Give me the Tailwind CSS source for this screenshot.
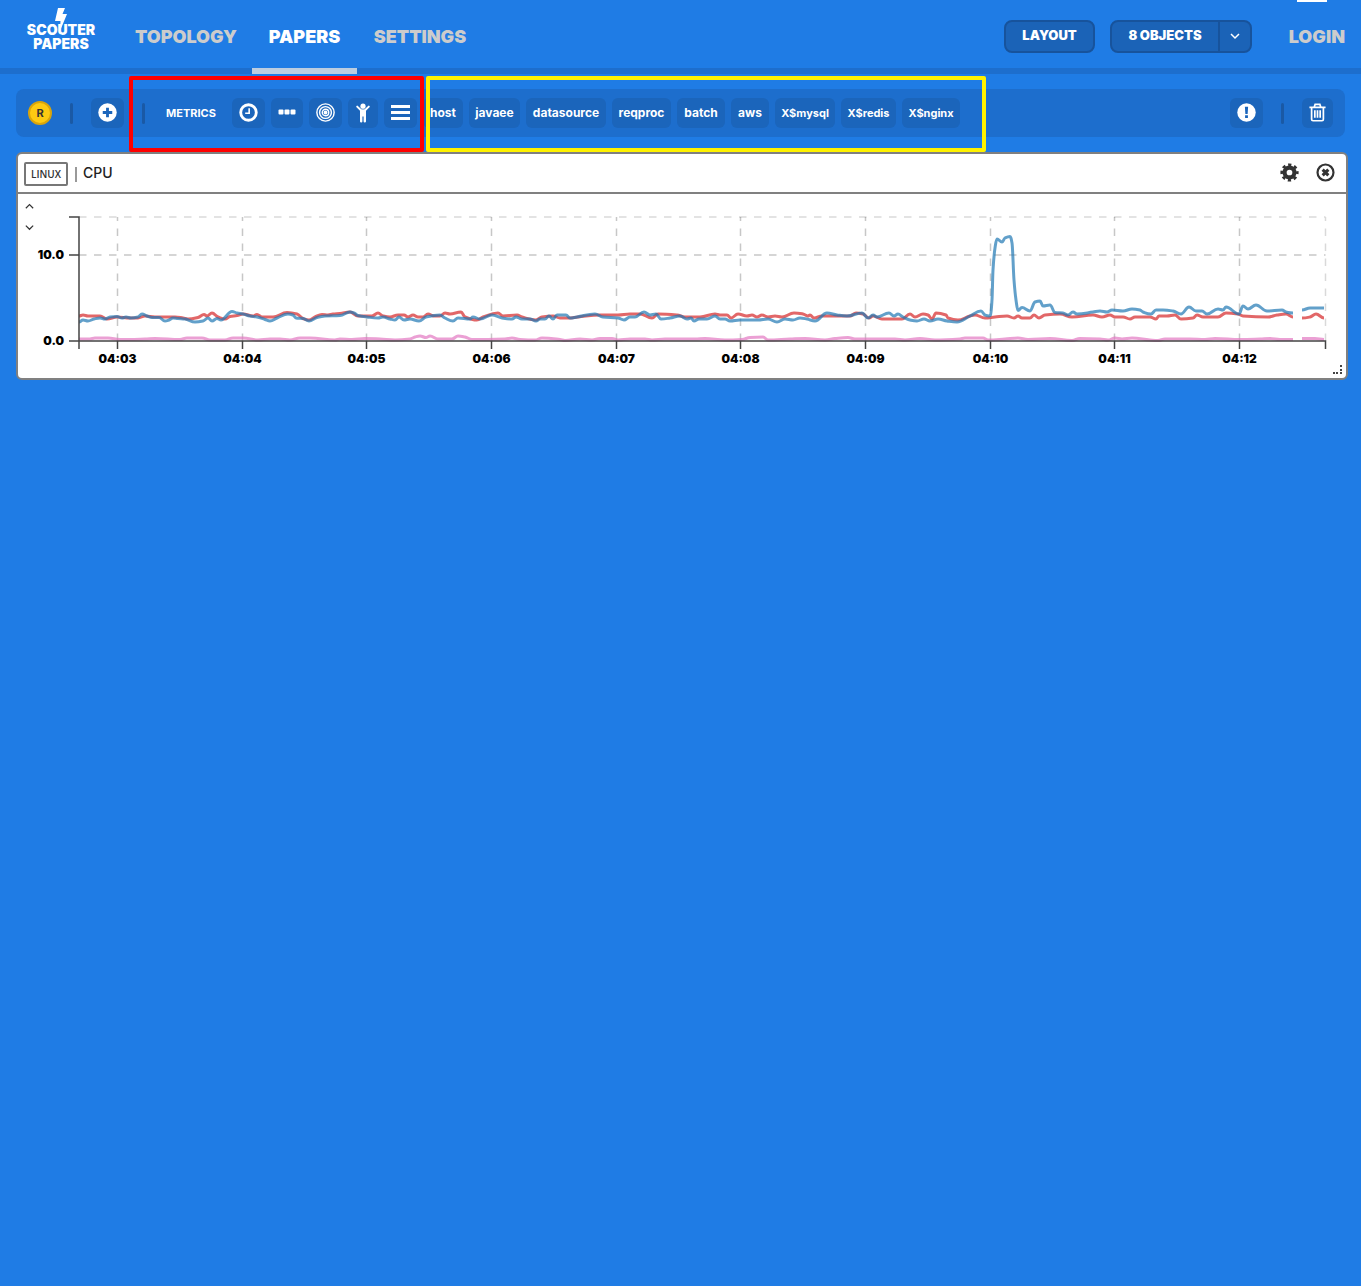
<!DOCTYPE html>
<html lang="en">
<head>
<meta charset="utf-8">
<title>Scouter Papers</title>
<script src="https://cdn.jsdelivr.net/npm/@tailwindcss/browser@4"></script>
</head>
<body class="relative min-h-screen bg-[#1f7ce5] font-['Inter',sans-serif] text-white">

<header class="flex h-[74px] border-b-6 border-[#1d6ecd] pr-4">
  <a href="#" class="flex w-[122px] justify-center pt-2" aria-label="Scouter Papers">
    <span class="relative block h-12 w-20 pt-[15px] text-center text-[14px] leading-[14px] font-black">
      <svg class="absolute top-0 left-[32px] h-6 w-4" viewBox="0 0 16 24" fill="#fff"><path d="M5 0h7L9.500 6H14L7 23 7.500 13H2z"/></svg>
      <span class="block">SCOUTER</span>
      <span class="block">PAPERS</span>
    </span>
  </a>
  <nav class="-ml-0.5 flex text-[18px] font-black text-[#ccc]">
    <a href="#" class="flex h-[74px] w-[132px] items-center justify-center pb-0.5">TOPOLOGY</a>
    <a href="#" class="flex h-[74px] w-[105px] items-center justify-center border-b-6 border-[#bccde0] pt-1 text-white">PAPERS</a>
    <a href="#" class="flex h-[74px] w-[126px] items-center justify-center pb-0.5">SETTINGS</a>
  </nav>
  <div class="ml-auto flex items-center gap-[15px] pt-1 text-[13px] font-black">
    <button class="h-[33px] w-[91px] rounded-lg border-2 border-[#17539c] bg-[#1b63b7]">LAYOUT</button>
    <div class="flex h-[33px] rounded-lg border-2 border-[#17539c] bg-[#1b63b7]">
      <button class="w-[106px]">8 OBJECTS</button>
      <button class="flex w-8 items-center justify-center border-l-2 border-[#17539c]" aria-label="Select objects">
        <svg class="size-3" viewBox="0 0 12 12" fill="none" stroke="#fff" stroke-width="1.500"><path d="M2 4l4 4 4-4"/></svg>
      </button>
    </div>
    <a href="#" class="ml-4 w-[62px] text-right text-[18px] text-[#ccc]">LOGIN</a>
  </div>
  <div class="absolute top-0 right-[34px] h-0.5 w-[30px] bg-white"></div>
</header>

<div class="mt-[15px] mr-4 ml-4 flex h-12 items-center rounded-lg bg-[#1d6ecd] px-3 text-[12px] font-bold">
  <div class="flex size-6 items-center justify-center rounded-full border-2 border-[#d8a40c] bg-[#fdca12] text-[11px] text-[#333]">R</div>
  <div class="ml-[18px] h-[21px] w-[3px] rounded-sm bg-[#1a59a5]"></div>
  <button class="ml-[18px] flex h-[30px] w-[33px] items-center justify-center rounded-md bg-[#1b65bb]" aria-label="Add">
    <svg class="mb-px size-[19px]" viewBox="0 0 20 20"><circle cx="10" cy="10" r="9.700" fill="#fff"/><path d="M10 5v10M5 10h10" stroke="#1b65bb" stroke-width="3"/></svg>
  </button>
  <div class="ml-[18px] h-[21px] w-[3px] rounded-sm bg-[#1a59a5]"></div>
  <div class="ml-[17px] flex w-[58px] justify-center text-[11px]">METRICS</div>
  <div class="ml-3 flex gap-1.5">
    <button class="flex h-[30px] w-[33px] items-center justify-center rounded-md bg-[#1b65bb]" aria-label="Time">
      <svg class="mb-px size-[19px]" viewBox="0 0 20 20" fill="none" stroke="#fff"><circle cx="10" cy="10" r="8.200" stroke-width="3"/><path d="M10.700 5.500v5.300H6.500" stroke-width="1.700"/></svg>
    </button>
    <button class="flex h-[30px] w-8 items-center justify-center rounded-md bg-[#1b65bb]" aria-label="More">
      <svg class="mb-0.5 size-5" viewBox="0 0 20 20" fill="#fff"><rect x="1.500" y="7.500" width="5" height="5" rx="1"/><rect x="7.500" y="7.500" width="5" height="5" rx="1"/><rect x="13.500" y="7.500" width="5" height="5" rx="1"/></svg>
    </button>
    <button class="flex h-[30px] w-[33px] items-center justify-center rounded-md bg-[#1b65bb]" aria-label="Target">
      <svg class="mb-px size-[19px]" viewBox="0 0 20 20" fill="none" stroke="#fff" stroke-width="1.500"><circle cx="10" cy="10" r="9.100"/><circle cx="10" cy="10" r="6.200"/><circle cx="10" cy="10" r="3.400"/><circle cx="10" cy="10" r="2" fill="#fff" stroke="none"/></svg>
    </button>
    <button class="flex h-[30px] w-[30px] items-center justify-center rounded-md bg-[#1b65bb]" aria-label="Active users">
      <svg class="size-5" viewBox="0 0 20 20" fill="#fff"><circle cx="10" cy="3.200" r="2.600"/><path d="M4.200 3.600L8.200 7.500h3.600l4-3.900" fill="none" stroke="#fff" stroke-width="2" stroke-linecap="round" stroke-linejoin="round"/><path d="M7 6.700h6V18.500q0 1-1.200 1t-1.200-1V13.500H9.400v5q0 1-1.200 1t-1.200-1z"/></svg>
    </button>
    <button class="flex h-[30px] w-[33px] items-center justify-center rounded-md bg-[#1b65bb]" aria-label="Menu">
      <svg class="mb-px size-[19px]" viewBox="0 0 19 19" stroke="#fff" stroke-width="3"><path d="M0 3.500h19M0 9.500h19M0 15.500h19"/></svg>
    </button>
    <button class="h-[30px] w-10 rounded-md bg-[#1b65bb]">host</button>
    <button class="h-[30px] w-[51px] rounded-md bg-[#1b65bb]">javaee</button>
    <button class="h-[30px] w-20 rounded-md bg-[#1b65bb]">datasource</button>
    <button class="h-[30px] w-[59px] rounded-md bg-[#1b65bb]">reqproc</button>
    <button class="h-[30px] w-12 rounded-md bg-[#1b65bb]">batch</button>
    <button class="h-[30px] w-[38px] rounded-md bg-[#1b65bb]">aws</button>
    <button class="h-[30px] w-[60px] rounded-md bg-[#1b65bb] text-[11px]">X$mysql</button>
    <button class="h-[30px] w-[55px] rounded-md bg-[#1b65bb] text-[11px]">X$redis</button>
    <button class="h-[30px] w-[58px] rounded-md bg-[#1b65bb] text-[11px]">X$nginx</button>
  </div>
  <button class="ml-auto flex h-[30px] w-[33px] items-center justify-center rounded-md bg-[#1b65bb]" aria-label="Alerts">
    <svg class="mb-px size-[19px]" viewBox="0 0 20 20"><circle cx="10" cy="10" r="9.700" fill="#fff"/><path d="M8.300 4h3.400l-.5 7.500H8.800zM8.500 13h3v2.800h-3z" fill="#1b65bb"/></svg>
  </button>
  <div class="ml-[18px] h-[21px] w-[3px] rounded-sm bg-[#1a59a5]"></div>
  <button class="ml-[18px] flex h-[30px] w-[31px] items-center justify-center rounded-md bg-[#1b65bb]" aria-label="Clear all">
    <svg class="mb-px size-[19px]" viewBox="0 0 20 20" fill="none" stroke="#fff" stroke-width="1.800"><path d="M1.500 4.500h17M6.500 4.500L7.500 1.500h5l1 3M3.800 4.500v12.700q0 1.500 1.500 1.500h9.400q1.500 0 1.500-1.500V4.500M7.200 7.500v8M10 7.500v8M12.800 7.500v8"/></svg>
  </button>
</div>

<main class="relative mt-[15px] mr-[13px] ml-4 rounded-md border-2 border-[#808080] bg-white font-['Open_Sans',sans-serif] text-[#333]">
  <div class="flex h-10 items-center border-b-2 border-[#808080] pr-[11px] pb-0.5 pl-1.5">
    <span class="mt-1 flex h-6 w-11 items-center justify-center rounded-xs border-2 border-[#777] text-[10px] font-semibold">LINUX</span>
    <span class="mt-1 ml-[7px] h-[15px] w-0.5 bg-[#999]"></span>
    <h2 class="ml-1.5 font-['Inter',sans-serif] text-[14px] font-medium text-[#222]">CPU</h2>
    <button class="mr-[17px] ml-auto" aria-label="Configure">
      <svg class="size-[19px]" viewBox="0 0 20 20" fill="none" stroke="#333"><circle cx="10" cy="10" r="5.200" stroke-width="4.400"/><circle cx="10" cy="10" r="8.200" stroke-width="2.800" stroke-dasharray="3.400 3.040" stroke-dashoffset="1.700"/></svg>
    </button>
    <button aria-label="Close">
      <svg class="size-[19px]" viewBox="0 0 20 20" fill="none" stroke="#333"><circle cx="10" cy="10" r="8.400" stroke-width="2.300"/><path d="M7 7l6 6M13 7l-6 6" stroke-width="3.200"/></svg>
    </button>
  </div>
  <svg id="chart" class="block w-full" viewBox="18 194 1328 184" font-family="Inter, sans-serif" font-size="12" font-weight="900" fill="none" role="img" aria-label="CPU usage by time">
    <g id="grid" stroke="#000" stroke-opacity=".22" stroke-width="1.500" stroke-dasharray="7.500 7.500"></g>
    <g id="series" stroke-width="3" stroke-opacity=".7" stroke-linejoin="round"></g>
    <g id="axes" stroke="#444" stroke-width="1.500">
      <path d="M69 217H79V349M69 255h10M69 341H1325.500V349"/>
    </g>
    <g id="labels" fill="#000">
      <text x="64" y="259" text-anchor="end">10.0</text>
      <text x="64" y="345" text-anchor="end">0.0</text>
    </g>
    <path d="M1340 365h2v2h-2zM1340 369h2v2h-2zM1336 372h2v2h-2zM1340 372h2v2h-2zM1333 372h2v2h-2z" fill="#444"/>
  </svg>
  <div class="absolute top-[47px] left-1.5 flex flex-col gap-[11px]">
    <button class="flex" aria-label="Increase maximum"><svg class="h-2.5 w-[11px]" viewBox="0 0 12 10" fill="none" stroke="#333" stroke-width="1.300"><path d="M2 7.500l4-4 4 4"/></svg></button>
    <button class="flex" aria-label="Decrease maximum"><svg class="h-2.5 w-[11px]" viewBox="0 0 12 10" fill="none" stroke="#333" stroke-width="1.300"><path d="M2 3.500l4 4 4-4"/></svg></button>
  </div>
</main>

<div class="pointer-events-none absolute top-[76px] left-[129px] h-[76px] w-[295px] rounded-xs border-4 border-[#ff0000]"></div>
<div class="pointer-events-none absolute top-[76px] left-[426px] h-[76px] w-[560px] rounded-xs border-4 border-[#fff200]"></div>

<script>
  const NS = "http://www.w3.org/2000/svg";
  const add = (id, tag, attrs, text) => {
    const el = document.createElementNS(NS, tag);
    for (const k in attrs) el.setAttribute(k, attrs[k]);
    if (text) el.textContent = text;
    document.getElementById(id).appendChild(el);
  };

  // grid, minute ticks and their labels
  add("grid", "path", { d: "M79 217H1325.500M1325.500 341V217", "stroke-opacity": ".15" });
  add("grid", "path", { d: "M79 255H1325.500" });
  for (let i = 0; i < 10; i++) {
    const x = Math.floor(117.500 + i * 124.650);
    add("grid", "path", { d: `M${x + .5} 341V217` });
    add("axes", "path", { d: `M${x + .5} 341V349` });
    add("labels", "text", { x: x + .5, y: 363, "text-anchor": "middle" }, "04:" + String(i + 3).padStart(2, "0"));
  }

  // smooth curve through "x,y" pairs
  const curve = (s) => {
    const p = s.trim().split(/\s+/).map((q) => q.split(",").map(Number));
    let d = "M" + p[0];
    for (let i = 1; i < p.length; i++) {
      const m = (p[i][0] - p[i - 1][0]) * 0.4;
      const slope = (k) => {
        if (k < 1 || k > p.length - 2) return 0;
        const a = (p[k][1] - p[k - 1][1]) / (p[k][0] - p[k - 1][0]);
        const b = (p[k + 1][1] - p[k][1]) / (p[k + 1][0] - p[k][0]);
        return a * b <= 0 ? 0 : 2 * a * b / (a + b);
      };
      d += `C${p[i-1][0] + m},${p[i-1][1] + slope(i-1) * m} ${p[i][0] - m},${p[i][1] - slope(i) * m} ${p[i]}`;
    }
    return d;
  };

  const series = [
    { color: "#e377c2", runs: [
      "79,339 90,339 95,338 108,338 120,339.5 145,339 155,338.5 180,339.5 187,338 202,338 210,340 225,340 233,338 243,338 258,340 270,339 280,339 290,340 300,338 310,338 335,340 340,339 352,339.5 365,338.5 380,339 395,340 410,339 415,337 420,336 426,337.5 430,336 438,339 452,339 458,336 465,337 472,339.5 505,339 512,338 520,339.5 535,340 542,338 560,339.5 565,340.5 580,339 592,340 600,338.5 612,338.500 618,340 630,339 645,339 652,340 665,339 680,339 695,339 705,338.500 725,340 742,339.500 750,337.500 763,337 768,340 790,339 805,338.500 825,340 835,338.500 848,337.500 855,339 895,339 905,340 920,338.500 935,340 960,339 965,338 983,338 988,340 1005,339 1018,338 1028,339.500 1050,338.500 1072,340.500 1080,338.500 1100,339 1108,340 1115,338 1122,339 1132,338 1150,340 1158,340.500 1165,339 1190,339 1205,339.500 1215,338.500 1240,339.500 1260,339 1270,338.500 1280,339.500 1293,339.500",
      "1302,338.500 1315,338.500 1324,339.500"] },
    { color: "#d62728", runs: [
      "79,316 83,315 88,316 100,316 107,319 117,317 130,318 138,318 145,316 155,317 175,317 183,318 188,319 198,317.5 204,314.5 207,316 212,313 218,317 225,319 230,316.5 237,315.5 243,314 253,316 257,314.5 262,317 273,317 287,312.5 297,314 303,318.5 309,320 315,317 322,314.5 328,315 333,314 340,313.5 350,312 358,316 372,316 378,313 383,316 390,317 398,315 404,315 408,317 413,315 418,317 423,317 428,314 434,316 440,316 445,313 450,314 461,312 465,317 477,320 483,317 498,313 503,316 517,315 522,317 536,320 542,317 553,316 560,318 568,318 578,317 600,315 618,315 630,314 640,314 652,318 658,314 677,315 685,317 700,317 715,314 720,315 727,315 731,318 738,314 747,316 752,315 757,317 762,315 768,317 775,316 782,317 794,313 803,314 808,316 810,315 814,318 822,316 837,316 850,316 856,313 863,314 869,318 873,316 882,319 902,319 910,314 915,317 923,314 928,315 932,319 936,313 946,315 948,318 958,320 970,316 975,315 985,318 995,317 1007,316 1014,318 1018,316 1022,318 1030,318 1034,315 1039,318 1045,315 1060,314 1072,317 1093,315 1102,317 1110,315 1115,317 1123,317 1130,319 1135,317 1150,317 1156,319 1159,316 1167,316 1175,315 1181,319 1193,318 1197,315 1203,317 1218,317 1226,313 1238,314 1243,316 1268,317 1277,315 1286,314 1293,317",
      "1302,318 1310,317 1316,314 1324,318"] },
    { color: "#1f77b4", runs: [
      "79,322 83,320 88,321 94,319 100,318 105,319 110,317 117,316.5 122,318 126,317 131,318 138,317 142,314 147,316 152,317.5 159,317.5 165,321 169,320 173,318 178,318.5 185,319 195,322 203,321 208,318 212,321 217,318.5 221,320 232,311.5 237,313 243,314 250,316 257,317 265,319.5 270,321 277,318 288,314 293,315 296,318 303,318.5 309,321 317,317.5 325,316 340,315.5 350,312 354,313 358,315.5 367,317 378,318 383,317 390,319 395,320 399,317 404,320 410,319 419,321 426,317 440,315 445,318 453,321 458,318 470,319 473,317 480,319 492,315 502,318 512,319 516,317 522,319 530,319 536,321 540,319 545,319 549,316 553,319 557,315 566,315 570,318 577,317 595,314 603,317 618,318 624,320 630,317 635,317 644,312 650,315 656,314 661,319 670,318 680,316 687,319 691,318 694,321 699,319 707,319 715,316 720,319 725,319 730,321 740,320 758,320 768,319 777,322 785,319 793,320 800,318 807,319 815,321 827,313 837,315 847,316 862,313 868,318 873,315 877,317 889,313 894,316 898,314 903,317 910,320 917,321 924,319 930,321 938,319 947,321 957,322 970,316 981,311 985,315 989,316 990.5,315 992,300 993,270 995,248 997,239 1002,242 1005,238 1010,236.5 1012,243 1014,280 1016,300 1018,310.5 1022,307.5 1030,311 1035,302 1040,301 1043,306 1050,305 1055,312.5 1063,313 1068,315 1073,312 1077,314 1093,312 1100,311 1107,312 1112,310 1123,311 1132,309 1140,310 1143,312 1151,314 1156,310 1163,310 1173,311 1181,314 1189,307 1196,311 1202,311 1207,314 1218,309 1223,310 1226,307 1239,314 1243,306 1248,309 1256,305 1267,311 1282,310 1286,312 1293,313",
      "1302,310 1310,308 1324,308"] },
  ];
  for (const s of series) add("series", "path", { d: s.runs.map(curve).join(""), stroke: s.color });
</script>
</body>
</html>
